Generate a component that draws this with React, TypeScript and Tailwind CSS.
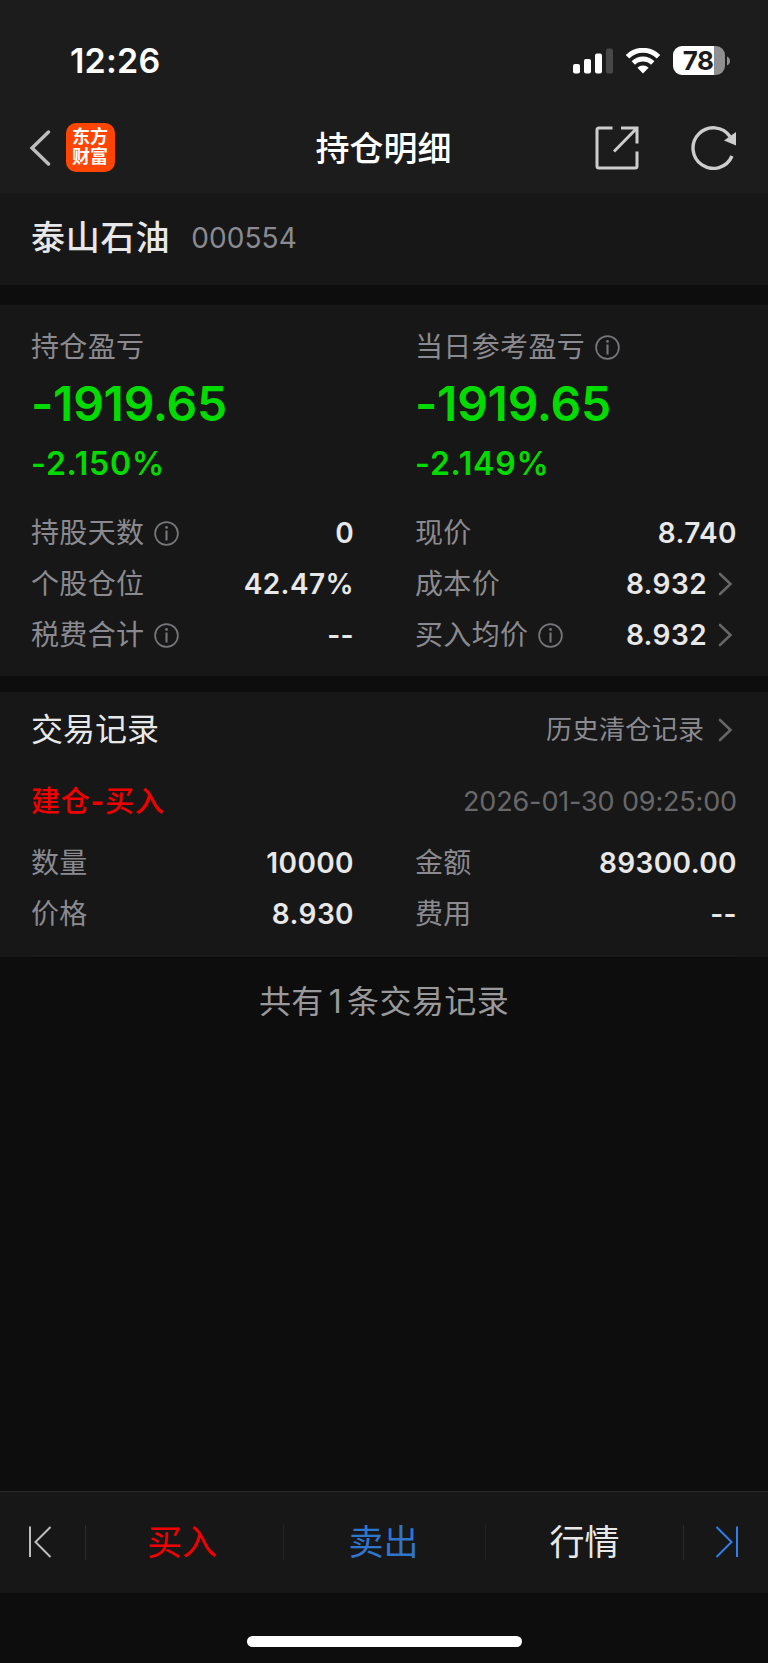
import type { ReactNode } from 'react';

interface MetricProps {
  label: string;
  value: string;
  info?: boolean;
  link?: boolean;
}

const positionLeft: MetricProps[] = [
  { label: '持股天数', value: '0', info: true },
  { label: '个股仓位', value: '42.47%' },
  { label: '税费合计', value: '--', info: true },
];

const positionRight: MetricProps[] = [
  { label: '现价', value: '8.740' },
  { label: '成本价', value: '8.932', link: true },
  { label: '买入均价', value: '8.932', info: true, link: true },
];

const tradeLeft: MetricProps[] = [
  { label: '数量', value: '10000' },
  { label: '价格', value: '8.930' },
];

const tradeRight: MetricProps[] = [
  { label: '金额', value: '89300.00' },
  { label: '费用', value: '--' },
];

function InfoIcon() {
  return (
    <svg className="ml-[9.5px] h-[25px] w-[25px] shrink-0" viewBox="0 0 25 25" fill="none">
      <circle cx="12.5" cy="12.5" r="11.4" stroke="#77777b" strokeWidth="1.7" />
      <circle cx="12.5" cy="6.4" r="1.4" fill="#77777b" />
      <path d="M12.500 9.500v10" stroke="#77777b" strokeWidth="2.1" />
    </svg>
  );
}

function ChevronIcon() {
  return (
    <svg className="ml-2.5 mr-1 h-6 w-4 shrink-0" viewBox="0 0 16 24" fill="none">
      <path d="M3 2l10.500 10L3 22" stroke="#666668" strokeWidth="2.6" strokeLinecap="round" />
    </svg>
  );
}

function SignalIcon() {
  return (
    <svg className="h-[26px] w-10" viewBox="0 0 40 26" fill="#fff">
      <rect x="0" y="16" width="7" height="9.5" rx="2" />
      <rect x="11" y="11" width="7" height="14.5" rx="2" />
      <rect x="22" y="5.5" width="7" height="20" rx="2" />
      <rect x="33" y="0.5" width="7" height="25" rx="2" fill="#484848" />
    </svg>
  );
}

function WifiIcon() {
  return (
    <svg className="ml-3 h-[26px] w-[36px]" viewBox="0 0 36 26" fill="none">
      <path d="M2.500 8.700a22 22 0 0 1 31 0" stroke="#fff" strokeWidth="5" />
      <path d="M8.300 15a13.800 13.800 0 0 1 19.400 0" stroke="#fff" strokeWidth="4.8" />
      <path d="M18 25.500l-5.600-5.700a8 8 0 0 1 11.200 0z" fill="#fff" />
    </svg>
  );
}

function Battery() {
  return (
    <div className="ml-3 flex items-center">
      <div className="flex h-[29px] w-[52px] items-center justify-center rounded-[9px] bg-[linear-gradient(to_right,#fff_41px,#8f8f8f_41px)] pr-0.5 text-[26px] font-bold leading-none tracking-[-0.5px] text-[#1c1c1c]">
        78
      </div>
      <svg className="ml-0.5 h-2.5 w-[3px]" viewBox="0 0 3 10">
        <path d="M0 0.500q3 1.500 3 4.500t-3 4.500z" fill="#8f8f8f" />
      </svg>
    </div>
  );
}

function Header() {
  return (
    <header className="h-[193px] bg-[#1c1c1c]">
      <div className="flex h-[104px] items-center justify-between pl-[70px] pr-[38px] pt-[18px]">
        <span className="text-[34px] font-semibold leading-none tracking-[0.2px] text-white">12:26</span>
        <div className="-mt-px flex items-center">
          <SignalIcon />
          <WifiIcon />
          <Battery />
        </div>
      </div>
      <div className="grid h-[87px] grid-cols-[1fr_auto_1fr] items-center">
        <div className="flex items-center pl-7">
          <svg className="h-9 w-6" viewBox="0 0 24 36" fill="none">
            <path d="M20.500 2L4 18l16.500 16" stroke="#bdbdbd" strokeWidth="3.4" strokeLinecap="round" />
          </svg>
          <div className="mb-px ml-[13.5px] flex h-[49px] w-[49px] flex-col items-center justify-center rounded-[10px] bg-[#ff4500] text-[18px] font-bold leading-[20px] text-white">
            <span>东方</span>
            <span>财富</span>
          </div>
        </div>
        <h1 className="-ml-px pt-[3px] text-[34px] font-medium leading-none text-white">持仓明细</h1>
        <div className="flex items-center justify-end pr-[31px] pt-px">
          <svg className="h-11 w-11" viewBox="0 0 44 44" fill="none" stroke="#cdcdcd" strokeWidth="3">
            <path d="M17.500 2H4a2 2 0 0 0-2 2V40a2 2 0 0 0 2 2H40a2 2 0 0 0 2-2V25.500" />
            <path d="M26 2H42V17.500M42 2L19 25.500" />
          </svg>
          <svg className="ml-[52px] h-11 w-[46px]" viewBox="0 0 46 44" fill="none">
            <path d="M41 30A20.300 20.300 0 1 1 39 10.500" stroke="#cdcdcd" strokeWidth="3.4" />
            <path d="M45 6V19.500L33 14.500z" fill="#cdcdcd" />
          </svg>
        </div>
      </div>
    </header>
  );
}

function Label({ children, info }: { children: ReactNode; info?: boolean }) {
  return (
    <div className="flex items-center text-[28px] leading-none tracking-[0.35px] text-[#8a8a90]">
      <span>{children}</span>
      {info && <InfoIcon />}
    </div>
  );
}

function Metric({ label, value, info, link }: MetricProps) {
  return (
    <div className="flex h-[51.2px] items-center justify-between">
      <Label info={info}>{label}</Label>
      <div className="flex items-center text-[28px] font-semibold leading-none tracking-[0.4px] text-[#e8e8e8]">
        <span>{value}</span>
        {link && <ChevronIcon />}
      </div>
    </div>
  );
}

function MetricGrid({ left, right }: { left: MetricProps[]; right: MetricProps[] }) {
  return (
    <div className="grid grid-cols-2 gap-x-[62px]">
      <div className="-mr-px">
        {left.map((item) => (
          <Metric key={item.label} {...item} />
        ))}
      </div>
      <div>
        {right.map((item) => (
          <Metric key={item.label} {...item} />
        ))}
      </div>
    </div>
  );
}

function Profit({ label, amount, percent, info }: { label: string; amount: string; percent: string; info?: boolean }) {
  return (
    <div>
      <div className="flex h-[30px] items-center">
        <Label info={info}>{label}</Label>
      </div>
      <div className="mt-[18px] text-[48px] font-semibold leading-[48px] tracking-[-0.25px] text-[#00dc00]">{amount}</div>
      <div className="mt-5 text-[32px] font-semibold leading-[32px] tracking-[0.8px] text-[#00dc00]">{percent}</div>
    </div>
  );
}

function Footer() {
  return (
    <footer className="mt-auto">
      <div className="flex h-[102px] items-center border-t border-[#2a2a2a] bg-[#171717] text-[35px] leading-none">
        <div className="flex w-[85px] pl-7">
          <svg className="mb-0.5 h-8 w-6" viewBox="0 0 24 32" fill="none" stroke="#bdbdbd" strokeWidth="2">
            <path d="M2 0.500V31M22.500 1L7.500 16l15 15" />
          </svg>
        </div>
        <button className="h-[35px] w-[198px] border-l border-[#2a2a2a] pr-[5px] text-[#f00000]">买入</button>
        <button className="h-[35px] w-[202px] border-l border-[#222] pr-0.5 text-[#2f75cc]">卖出</button>
        <button className="h-[35px] w-[198px] border-l border-[#222] text-[#e8e8e8]">行情</button>
        <div className="flex h-[35px] flex-1 items-center border-l border-[#2a2a2a] pl-[31px]">
          <svg className="mb-0.5 h-8 w-6" viewBox="0 0 24 32" fill="none" stroke="#2f80e8" strokeWidth="2">
            <path d="M22 0.500V31M1.500 1l15 15l-15 15" />
          </svg>
        </div>
      </div>
      <div className="flex h-[70px] items-end justify-center pb-4">
        <div className="h-[11px] w-[275px] rounded-full bg-white" />
      </div>
    </footer>
  );
}

export default function App() {
  return (
    <div className="flex h-[1663px] w-[768px] flex-col overflow-hidden bg-[#0d0d0d] font-['Inter','Noto_Sans_CJK_SC',sans-serif]">
      <Header />

      <section className="flex h-[92px] items-center bg-[#171717] px-[31px] pb-[3px]">
        <h2 className="text-[34px] font-medium leading-none tracking-[0.8px] text-[#e8e8e8]">泰山石油</h2>
        <span className="ml-[21px] text-[28px] leading-none tracking-[0.1px] text-[#8a8a90]">000554</span>
      </section>

      <section className="mt-5 h-[371px] bg-[#171717] px-[31px] pt-[27px]">
        <div className="grid grid-cols-2 gap-x-[62px]">
          <Profit label="持仓盈亏" amount="-1919.65" percent="-2.150%" />
          <Profit label="当日参考盈亏" amount="-1919.65" percent="-2.149%" info />
        </div>
        <div className="mt-[27.5px]">
          <MetricGrid left={positionLeft} right={positionRight} />
        </div>
      </section>

      <section className="mt-4 h-[265px] bg-[#171717] px-[31px] pt-[18px]">
        <div className="flex h-10 items-center justify-between">
          <h3 className="text-[32px] leading-none text-[#e8e8e8]">交易记录</h3>
          <div className="flex items-center text-[26px] leading-none tracking-[0.4px] text-[#8a8a90]">
            <span className="mr-[2.5px]">历史清仓记录</span>
            <ChevronIcon />
          </div>
        </div>
        <div className="mt-[31px] flex h-10 items-center justify-between">
          <span className="text-[29px] font-medium leading-none tracking-[0.8px] text-[#f00000]">
            建仓<span className="font-bold">-</span>买入
          </span>
          <span className="text-[27px] leading-none tracking-[-0.15px] text-[#68686a]">2026-01-30 09:25:00</span>
        </div>
        <div className="mt-4 h-[119px] border-b border-[#1c1c1c]">
          <MetricGrid left={tradeLeft} right={tradeRight} />
        </div>
      </section>

      <p className="mt-[29px] text-center text-[32px] leading-[32px] tracking-[0.4px] text-[#99999b]">
        共有<span className="mx-[5px]">1</span>条交易记录
      </p>

      <Footer />
    </div>
  );
}
